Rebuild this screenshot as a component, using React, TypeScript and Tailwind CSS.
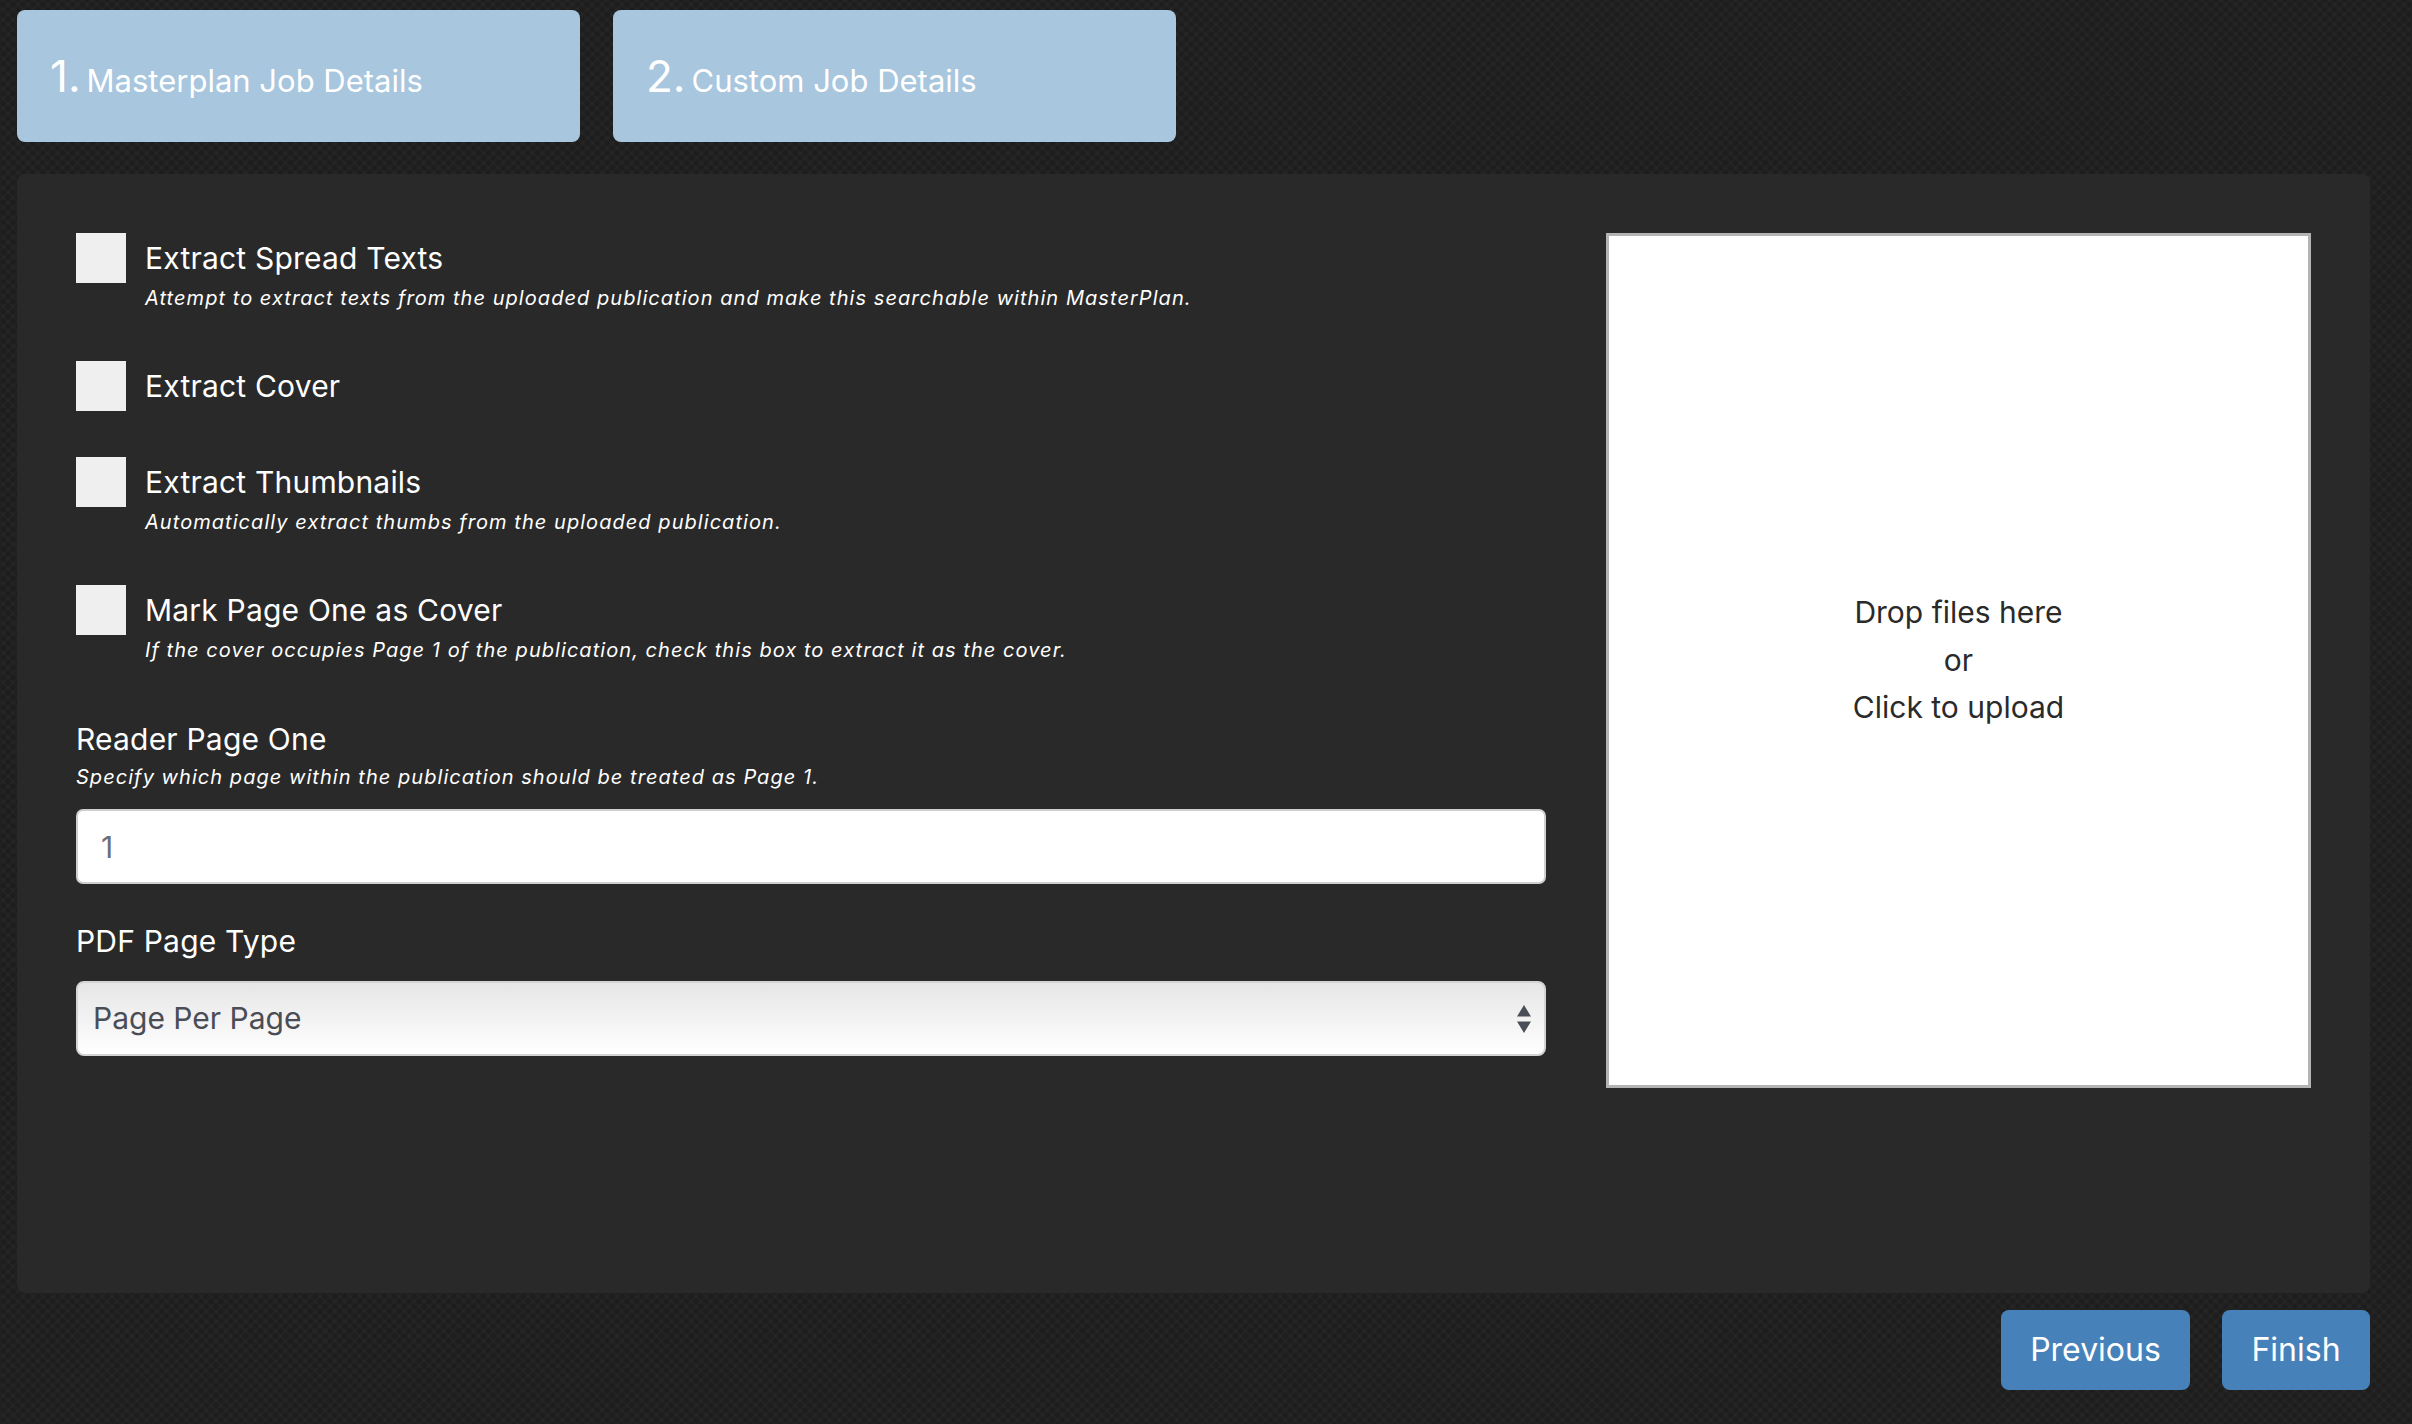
import React from "react";

function Tab({ n, label }: { n: string; label: string }) {
  return (
    <div className="flex h-[132px] w-[563px] items-center rounded-[8px] bg-[#a8c6de] px-[33px] text-white">
      <div className="flex items-baseline gap-[6px]">
        <span className="text-[44px] leading-none">{n}</span>
        <span className="text-[31px] leading-none">{label}</span>
      </div>
    </div>
  );
}

function CheckRow({
  label,
  desc,
  className,
}: {
  label: string;
  desc?: string;
  className?: string;
}) {
  return (
    <div className={"grid grid-cols-[50px_1fr] gap-x-[19px] " + (className ?? "")}>
      <div className="h-[50px] w-[50px] bg-[#efefef]" />
      <div className="flex h-[50px] items-center text-[30px] leading-none tracking-[0.2px] text-white">
        {label}
      </div>
      {desc && (
        <div className="col-start-2 text-[20px] italic leading-[30px] tracking-[1.05px] text-white">
          {desc}
        </div>
      )}
    </div>
  );
}

export default function App() {
  return (
    <div className="min-h-[1424px] w-full bg-[#1d1d1d] bg-[image:repeating-linear-gradient(45deg,rgba(255,255,255,0.018)_0px,rgba(255,255,255,0.018)_3px,transparent_3px,transparent_7px),repeating-linear-gradient(-45deg,rgba(255,255,255,0.018)_0px,rgba(255,255,255,0.018)_3px,transparent_3px,transparent_7px)] pl-[17px] pr-[42px] pt-[10px] font-['Inter',sans-serif] text-white">
      <div className="flex gap-[33px]">
        <Tab n="1." label="Masterplan Job Details" />
        <Tab n="2." label="Custom Job Details" />
      </div>

      <div className="mt-[32px] flex h-[1119px] gap-[60px] rounded-[8px] bg-[#292929] p-[59px]">
        <div className="flex w-[1470px] flex-col">
          <CheckRow
            label="Extract Spread Texts"
            desc="Attempt to extract texts from the uploaded publication and make this searchable within MasterPlan."
          />
          <CheckRow className="mt-[48px]" label="Extract Cover" />
          <CheckRow
            className="mt-[46px]"
            label="Extract Thumbnails"
            desc="Automatically extract thumbs from the uploaded publication."
          />
          <CheckRow
            className="mt-[48px]"
            label="Mark Page One as Cover"
            desc="If the cover occupies Page 1 of the publication, check this box to extract it as the cover."
          />

          <div className="mt-[56px] text-[30px] leading-[36px] tracking-[0.2px] text-white">
            Reader Page One
          </div>
          <div className="mt-[5px] text-[20px] italic leading-[30px] tracking-[1.05px] text-white">
            Specify which page within the publication should be treated as Page 1.
          </div>
          <input
            readOnly
            value="1"
            className="mt-[17px] h-[75px] w-full rounded-[7px] border-2 border-[#cfcfcf] bg-white pl-[23px] text-[30px] text-[#6b6f78] outline-none"
          />

          <div className="mt-[39px] text-[30px] leading-[36px] tracking-[0.2px] text-white">
            PDF Page Type
          </div>
          <div className="relative mt-[22px] h-[75px] w-full">
            <select
              defaultValue="page"
              className="h-full w-full appearance-none rounded-[8px] border-2 border-[#d4d4d4] bg-gradient-to-b from-[#e6e6e6] to-white pl-[15px] text-[30px] text-[#4a4d55] outline-none"
            >
              <option value="page">Page Per Page</option>
              <option value="spread">Spread Per Page</option>
            </select>
            <svg
              className="pointer-events-none absolute right-[14px] top-1/2 h-[30px] w-[16px] -translate-y-1/2"
              viewBox="0 0 16 30"
            >
              <polygon points="8,1 15,12.5 1,12.5" fill="#4a4e57" />
              <polygon points="1,17.5 15,17.5 8,29" fill="#4a4e57" />
            </svg>
          </div>
        </div>

        <div className="flex h-[855px] w-[705px] flex-col items-center justify-center border-[3px] border-[#b3b3b3] bg-white text-[30px] leading-[47.5px] text-[#2a2a2a]">
          <div>Drop files here</div>
          <div>or</div>
          <div>Click to upload</div>
        </div>
      </div>

      <div className="mt-[17px] flex justify-end gap-[32px]">
        <button className="h-[80px] w-[189px] rounded-[8px] bg-[#4682b9] text-[32px] text-white">
          Previous
        </button>
        <button className="h-[80px] w-[148px] rounded-[8px] bg-[#4682b9] text-[32px] text-white">
          Finish
        </button>
      </div>
    </div>
  );
}
